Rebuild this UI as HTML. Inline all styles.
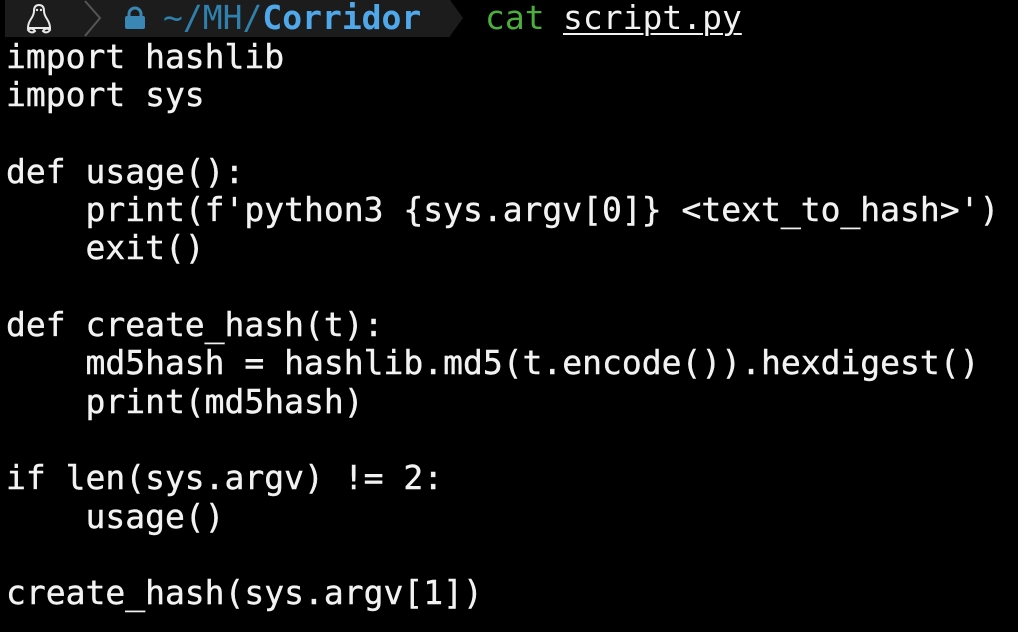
<!DOCTYPE html>
<html><head><meta charset="utf-8"><style>
html,body{margin:0;padding:0;background:#000;width:1018px;height:632px;overflow:hidden}
body{position:relative;font-family:"DejaVu Sans Mono","Liberation Mono",monospace;font-size:33px;color:#f2f2f2}
.bar{position:absolute;left:5px;top:0;width:445px;height:37px;background:#1c1c1c}
.tip{position:absolute;left:450px;top:0;width:0;height:0;border-top:18.5px solid transparent;border-bottom:18.5px solid transparent;border-left:13px solid #1c1c1c}
.t{position:absolute;top:-1px;line-height:38px;white-space:pre}
pre{position:absolute;left:6px;top:38px;margin:0;font:inherit;line-height:38.3px;white-space:pre;-webkit-text-stroke:0.4px #f2f2f2}
</style></head><body>
<div class="bar"></div><div class="tip"></div>
<svg style="position:absolute;left:24px;top:3px" width="30" height="32" viewBox="0 0 30 32">
<g fill="none" stroke="#e8e8e8" stroke-width="2">
<path d="M15 2c-4 0-5 3-5 6 0 3-1 5-3 8-2 3-3 6-3 9h22c0-3-1-6-3-9-2-3-3-5-3-8 0-3-1-6-5-6z"/>
<path d="M4 27c2-2 5-2 7 1-2 2-5 2-7-1zM26 27c-2-2-5-2-7 1 2 2 5 2 7-1z"/>
</g>
<circle cx="13" cy="7" r="1.2" fill="#e8e8e8"/><circle cx="17" cy="7" r="1.2" fill="#e8e8e8"/>
</svg>
<svg style="position:absolute;left:82px;top:0" width="22" height="38" viewBox="0 0 22 38"><path d="M3 1L18 18L3 36" fill="none" stroke="#555" stroke-width="2"/></svg>
<svg style="position:absolute;left:123px;top:6px" width="24" height="24" viewBox="0 0 24 24"><path d="M6 11V8a6 6 0 0 1 12 0v3" fill="none" stroke="#3a86b4" stroke-width="3"/><rect x="2" y="10" width="20" height="13" rx="2" fill="#3a86b4"/></svg>
<div class="t" style="left:163px;color:#2f80ad">~/MH/<b style="color:#4fa8ea">Corridor</b></div>
<div class="t" style="left:485px;color:#4cae3c">cat</div>
<div class="t" style="left:563px;color:#f2f2f2;text-decoration:underline;text-underline-offset:4px;text-decoration-thickness:2px">script.py</div>
<pre>import hashlib
import sys

def usage():
    print(f'python3 {sys.argv[0]} &lt;text_to_hash&gt;')
    exit()

def create_hash(t):
    md5hash = hashlib.md5(t.encode()).hexdigest()
    print(md5hash)

if len(sys.argv) != 2:
    usage()

create_hash(sys.argv[1])</pre>
</body></html>
